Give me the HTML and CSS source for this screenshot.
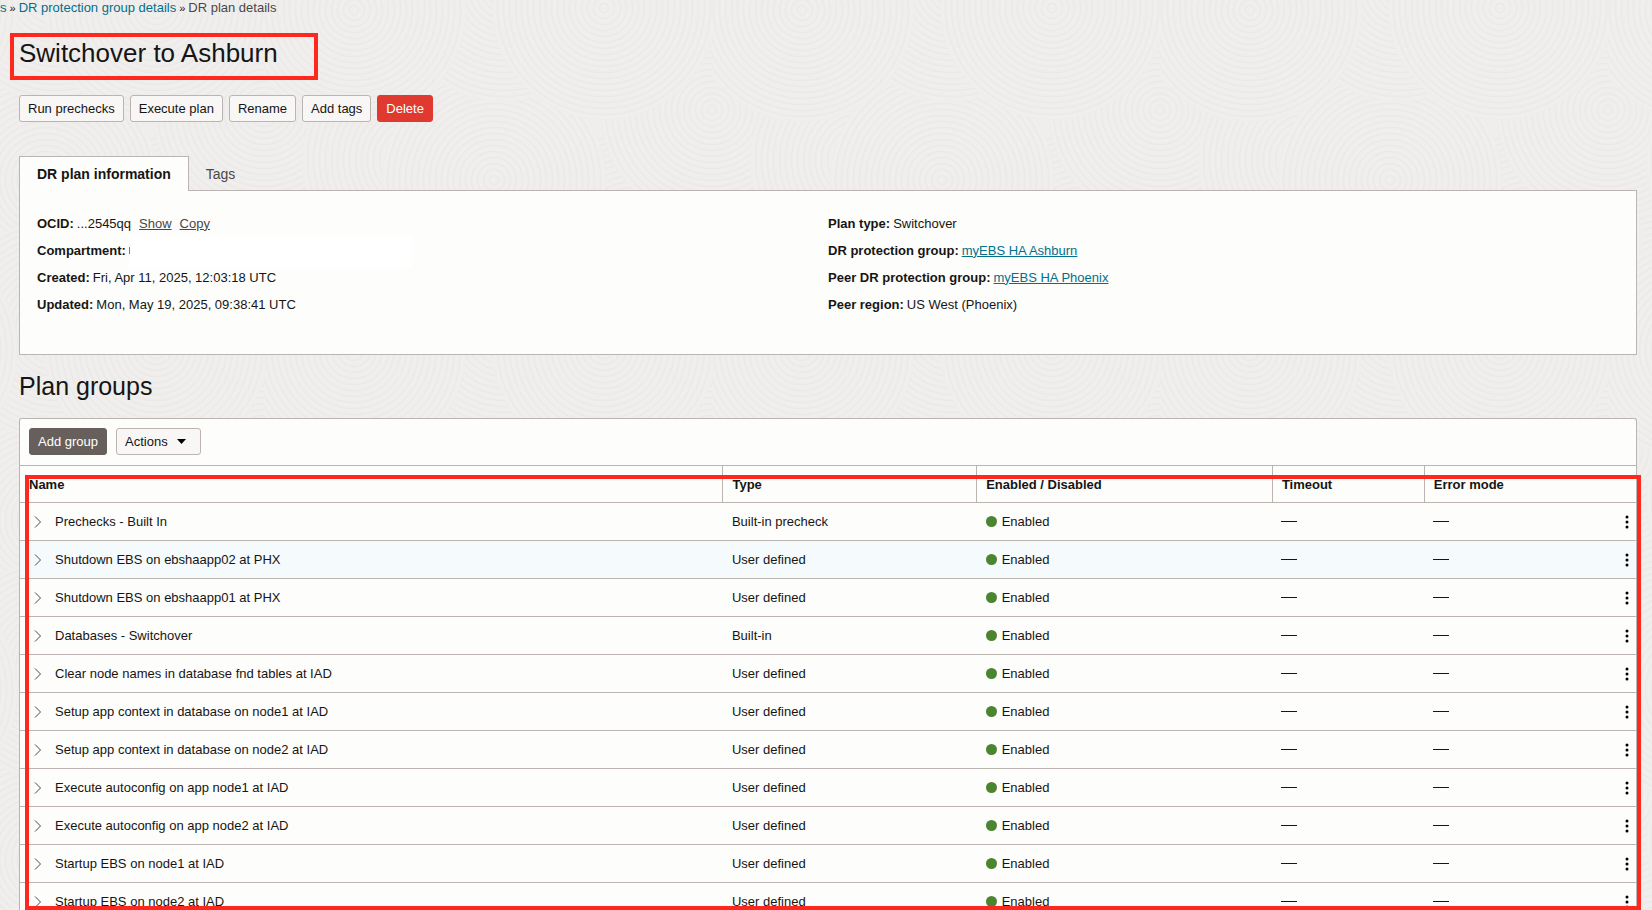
FILE: index.html
```html
<!DOCTYPE html>
<html lang="en">
<head>
<meta charset="utf-8">
<title>DR plan details</title>
<link rel="stylesheet" href="styles.css">
</head>
<body>
<svg class="texture" aria-hidden="true">
  <defs>
    <radialGradient id="rings" gradientUnits="userSpaceOnUse" cx="0" cy="0" r="6" spreadMethod="repeat">
      <stop offset="0" stop-color="#f0efee"/>
      <stop offset="0.5" stop-color="#efeeed"/>
      <stop offset="0.8" stop-color="#eae9e8"/>
      <stop offset="1" stop-color="#f0efee"/>
    </radialGradient>
    <circle id="disc" r="112" fill="url(#rings)"/>
    <pattern id="waves" width="448" height="340" patternUnits="userSpaceOnUse" x="264" y="0">
      <rect width="448" height="340" fill="#efeeed"/>
      <use href="#disc" x="60" y="290"/>
      <use href="#disc" x="508" y="290"/>
      <use href="#disc" x="60" y="-50"/>
      <use href="#disc" x="370" y="240"/>
      <use href="#disc" x="-78" y="240"/>
      <use href="#disc" x="0" y="110"/>
      <use href="#disc" x="448" y="110"/>
      <use href="#disc" x="150" y="160"/>
      <use href="#disc" x="230" y="180"/>
      <use href="#disc" x="240" y="330"/>
      <use href="#disc" x="240" y="-10"/>
      <use href="#disc" x="90" y="10"/>
      <use href="#disc" x="90" y="350"/>
      <use href="#disc" x="340" y="8"/>
      <use href="#disc" x="340" y="348"/>
    </pattern>
  </defs>
  <rect width="100%" height="100%" fill="url(#waves)"/>
</svg>
<svg class="symbols" aria-hidden="true">
  <symbol id="chevron" viewBox="0 0 8 12"><path d="M1 .5 6.500 6 1 11.500" fill="none" stroke="#4a4745" stroke-width="1"/></symbol>
  <symbol id="dots" viewBox="0 0 4 14"><circle cx="2" cy="2" r="1.500"/><circle cx="2" cy="7" r="1.500"/><circle cx="2" cy="12" r="1.500"/></symbol>
</svg>
<main class="page">
  <nav class="crumbs" aria-label="Breadcrumb">
    <a href="#">s</a><span class="sep">»</span><a href="#">DR protection group details</a><span class="sep">»</span><span>DR plan details</span>
  </nav>
  <h1 class="title">Switchover to Ashburn</h1>
  <div class="buttons">
    <button class="btn">Run prechecks</button>
    <button class="btn">Execute plan</button>
    <button class="btn">Rename</button>
    <button class="btn">Add tags</button>
    <button class="btn danger">Delete</button>
  </div>
  <div class="tabs" role="tablist">
    <button class="tab active" role="tab" aria-selected="true">DR plan information</button>
    <button class="tab" role="tab" aria-selected="false">Tags</button>
  </div>
  <section class="info">
    <div class="facts">
      <div class="fact"><b>OCID:</b> <span>...2545qq</span> <a class="plain" href="#">Show</a> <a class="plain" href="#">Copy</a></div>
      <div class="fact"><b>Compartment:</b> <span class="masked"></span></div>
      <div class="fact"><b>Created:</b> <span>Fri, Apr 11, 2025, 12:03:18 UTC</span></div>
      <div class="fact"><b>Updated:</b> <span>Mon, May 19, 2025, 09:38:41 UTC</span></div>
    </div>
    <div class="facts">
      <div class="fact"><b>Plan type:</b> <span>Switchover</span></div>
      <div class="fact"><b>DR protection group:</b> <a href="#">myEBS HA Ashburn</a></div>
      <div class="fact"><b>Peer DR protection group:</b> <a href="#">myEBS HA Phoenix</a></div>
      <div class="fact"><b>Peer region:</b> <span>US West (Phoenix)</span></div>
    </div>
  </section>
  <h2 class="subtitle">Plan groups</h2>
  <section class="groups">
    <div class="panel">
      <div class="toolbar">
        <button class="btn dark">Add group</button>
        <button class="btn menu">Actions <svg width="9" height="5" viewBox="0 0 9 5" aria-hidden="true"><path d="M0 0h9L4.500 5z"/></svg></button>
      </div>
      <table class="grid">
        <colgroup><col class="c-name"><col class="c-type"><col class="c-state"><col class="c-time"><col></colgroup>
        <thead><tr><th>Name</th><th>Type</th><th>Enabled / Disabled</th><th>Timeout</th><th>Error mode</th></tr></thead>
        <tbody id="rows"></tbody>
      </table>
    </div>
    <div class="highlight"></div>
  </section>
</main>
<script src="rows.js"></script>
</body>
</html>
```
FILE: rows.js
```js
const groups = [
  ["Prechecks - Built In", "Built-in precheck"],
  ["Shutdown EBS on ebshaapp02 at PHX", "User defined"],
  ["Shutdown EBS on ebshaapp01 at PHX", "User defined"],
  ["Databases - Switchover", "Built-in"],
  ["Clear node names in database fnd tables at IAD", "User defined"],
  ["Setup app context in database on node1 at IAD", "User defined"],
  ["Setup app context in database on node2 at IAD", "User defined"],
  ["Execute autoconfig on app node1 at IAD", "User defined"],
  ["Execute autoconfig on app node2 at IAD", "User defined"],
  ["Startup EBS on node1 at IAD", "User defined"],
  ["Startup EBS on node2 at IAD", "User defined"]
];
document.getElementById("rows").innerHTML = groups.map(([name, type], i) => `
  <tr${i === 1 ? ' class="hover"' : ""}>
    <td><div class="cell"><button class="icon" aria-label="Expand ${name}"><svg width="8" height="12"><use href="#chevron"/></svg></button><span>${name}</span></div></td>
    <td>${type}</td>
    <td><div class="cell state"><span class="dot"></span><span>Enabled</span></div></td>
    <td><span class="dash"></span></td>
    <td><div class="cell last"><span class="dash"></span><button class="icon" aria-label="Actions for ${name}"><svg width="4" height="14"><use href="#dots"/></svg></button></div></td>
  </tr>`).join("");
```
FILE: styles.css
```css
* { box-sizing: border-box; }
body {
  margin: 0;
  height: 100vh;
  overflow: hidden;
  background: #efeeed;
  color: #161513;
  font-family: "Liberation Sans", Arial, sans-serif;
  font-size: 13px;
  line-height: 16px;
}
.texture { position: absolute; inset: 0; width: 100%; height: 100%; z-index: -1; }
.symbols { position: absolute; width: 0; height: 0; }
a { color: #00708c; }
button { font: inherit; color: inherit; }
.page { display: flex; flex-direction: column; height: 100vh; padding: 0 15px 0 19px; }
.crumbs { display: flex; margin-left: -19px; color: #4a4745; }
.crumbs a { text-decoration: none; }
.sep { padding: 0 3px; font-size: 11px; color: #161513; }
.title {
  align-self: flex-start;
  width: 308px;
  margin: 17px 0 15px -9px;
  padding: 0 4px 7px 5px;
  border: 4px solid #ff281f;
  font-size: 26px;
  font-weight: 400;
  line-height: 32px;
}
.buttons { display: flex; gap: 6px; }
.btn {
  height: 27px;
  padding: 0 8px;
  border: 1px solid #bbb4b1;
  border-radius: 3px;
  background: #f8f7f6;
}
.danger { background: #e03a30; border-color: #e03a30; color: #fff; }
.dark { background: #665f5b; border-color: #665f5b; color: #fff; }
.menu { display: flex; align-items: center; gap: 9px; padding-right: 14px; }
.tabs { display: flex; margin-top: 34px; }
.tab { height: 35px; padding: 0 17px; border: 0; background: none; font-size: 14px; color: #4a4745; }
.active {
  position: relative;
  z-index: 1;
  border: 1px solid #bbb4b1;
  border-bottom: 0;
  background: #fdfdfb;
  color: #161513;
  font-weight: 700;
}
.info {
  display: grid;
  grid-template-columns: 1fr 1fr;
  margin-top: -1px;
  min-height: 165px;
  padding: 19px 17px 35px;
  border: 1px solid #bbb4b1;
  background: #fdfdfb;
}
.fact { display: flex; align-items: center; gap: 3px; height: 27px; }
.plain { margin-left: 5px; color: #4a4745; }
.masked { width: 283px; height: 32px; background: linear-gradient(#777, #777) 0 50% / 1px 7px no-repeat #fff; }
.subtitle { margin: 15px 0 16px; font-size: 25px; font-weight: 400; line-height: 32px; }
.groups { position: relative; flex: 1; min-height: 0; }
.panel {
  height: 100%;
  overflow: hidden;
  border: 1px solid #bbb4b1;
  border-bottom: 0;
  border-radius: 3px 3px 0 0;
  background: #fdfdfb;
}
.toolbar { display: flex; gap: 9px; padding: 9px 9px 10px; }
.grid { width: 100%; table-layout: fixed; border-collapse: collapse; }
.c-name { width: 43.500%; }
.c-type { width: 15.700%; }
.c-state { width: 18.300%; }
.c-time { width: 9.400%; }
.grid th {
  height: 37px;
  padding: 2px 9px 0;
  border-top: 1px solid #bbb4b1;
  border-right: 1px solid #bbb4b1;
  text-align: left;
}
.grid th:last-child { border-right: 0; }
.grid td { height: 38px; padding: 0 9px; border-top: 1px solid #bbb4b1; }
.hover { background: #f5fafd; }
.cell { display: flex; align-items: center; gap: 13px; }
.state { gap: 5px; }
.dot { width: 11px; height: 11px; border-radius: 50%; background: #4b852f; }
.dash { display: block; width: 16px; height: 1px; background: #161513; }
.last { justify-content: space-between; }
.icon { display: flex; padding: 0 0 0 5px; border: 0; background: none; }
.last .icon { padding: 0; margin-right: -2px; }
.highlight {
  position: absolute;
  inset: 57px -4px 0 6px;
  border: 4px solid #ff281f;
  pointer-events: none;
}
```
